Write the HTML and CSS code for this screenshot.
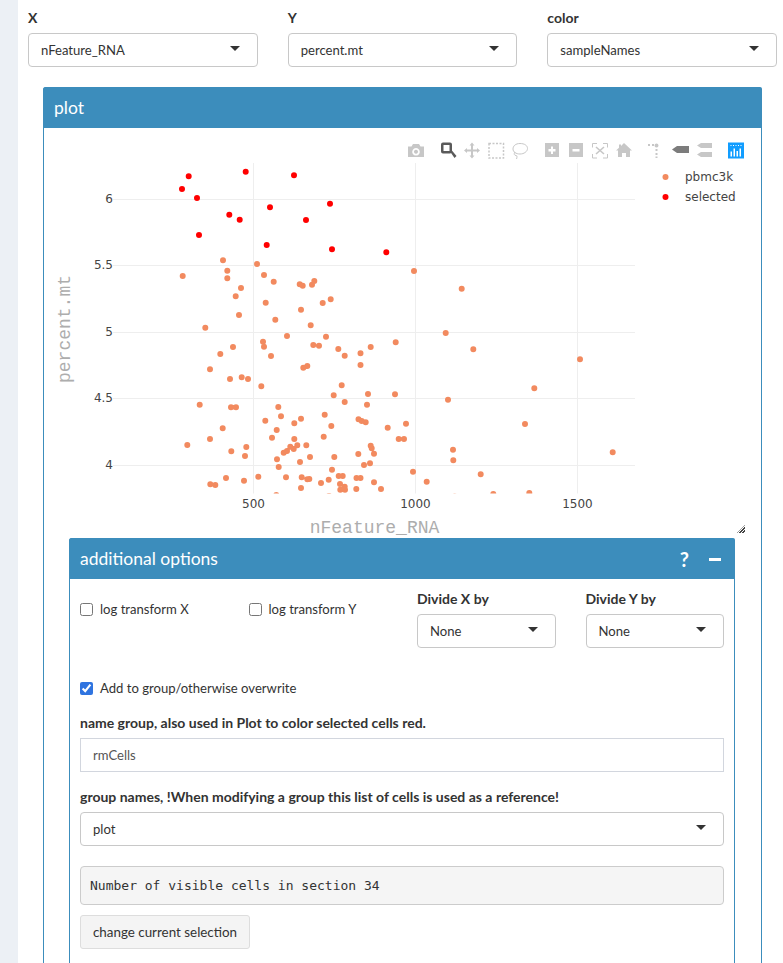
FILE: index.html
```html
<!DOCTYPE html>
<html lang="en">
<head>
  <meta charset="UTF-8" />
  <title>plot</title>
  <link rel="stylesheet" href="styles.css">
</head>
<body>
  <div class="side"></div>
  <main class="content">
    <div class="top-row">
      <div>
        <label class="field-label">X</label>
        <div class="select">nFeature_RNA</div>
      </div>
      <div>
        <label class="field-label">Y</label>
        <div class="select">percent.mt</div>
      </div>
      <div>
        <label class="field-label">color</label>
        <div class="select">sampleNames</div>
      </div>
    </div>

    <section class="box plot-box">
      <div class="box-header"><h3>plot</h3></div>
      <div class="plot-wrap">
        <svg class="plot" viewBox="44 128 717 410" width="717" height="410">
          <defs>
            <clipPath id="plot-clip"><rect x="113" y="163" width="522" height="330.5"/></clipPath>
          </defs>
          <path class="grid" d="M253.5 163V493.5M415.5 163V493.5M577.5 163V493.5M113 199.5H635M113 265.5H635M113 332.5H635M113 398.5H635M113 465.5H635"/>
          <g clip-path="url(#plot-clip)">
            <path class="dots-a" d="M223 260.3h0M257 264h0M227.3 270.7h0M264 275h0M182.7 276h0M227.3 278.3h0M273.7 281.7h0M314.3 281h0M299.7 284.3h0M302.7 285.7h0M312 284.7h0M241 288h0M235.7 296.3h0M330.7 299.3h0M265.7 302.7h0M322.7 303h0M301 309.7h0M239 315h0M275.3 319.7h0M310.7 325.3h0M205.3 327.7h0M287 336h0M326 336.7h0M263 341.7h0M313.3 345h0M319 345.7h0M233 347h0M264 346.7h0M338.3 349h0M414 271h0M461.7 288.7h0M445.7 333h0M395.7 342.3h0M370.7 347h0M473.3 349.3h0M220.3 354h0M271 356h0M344.7 355.7h0M360.5 353.3h0M307.3 366h0M303.3 367.7h0M360.5 365h0M210 369.3h0M241.7 377.3h0M230 379h0M248 379h0M261.3 386.3h0M341.7 385.3h0M333.7 395.3h0M344.7 402h0M199.7 404.7h0M231 407.3h0M236 407.3h0M278.3 407h0M281 416.3h0M324.7 414.7h0M265.3 420.7h0M301 418.7h0M294.3 423.3h0M358.5 419.3h0M331.3 426h0M222.7 428.3h0M276.7 430h0M272 437.7h0M323.7 436.7h0M210 439h0M294.3 439h0M187.3 445h0M246.3 447h0M306.3 445.3h0M297.3 445.3h0M290.3 446.7h0M293.7 449h0M287 451h0M283.7 452.7h0M231.3 451.3h0M245 456h0M310 457h0M334.3 457h0M358.3 454h0M277 459.3h0M300 462h0M278.7 467h0M332 469.7h0M226 478h0M258.3 476.7h0M286 477.3h0M301.7 477.3h0M307.3 479.3h0M309.3 479h0M338.7 476h0M342.7 476h0M328.7 479.7h0M356.5 478h0M360.5 478h0M244 480.7h0M321 483h0M210.3 484.3h0M215.3 485h0M340 484h0M344.7 486.7h0M301 488h0M340.3 489.7h0M345 489.7h0M356.3 489h0M276.3 495h0M329 496h0M580 359.3h0M534.3 388.3h0M368 394h0M395 394.3h0M367 404.7h0M448 399.7h0M406 423.7h0M361.7 421h0M365.7 422.3h0M387.7 427.7h0M525 424h0M398.7 439h0M404 439h0M453 449.7h0M370.7 445.7h0M371.7 448.3h0M374 453.7h0M453.3 460.3h0M612.7 452.3h0M370 463.3h0M364 465h0M413 471.7h0M480.7 474.3h0M426.7 481.7h0M374 482.3h0M381 489h0M493.3 494h0M529.3 493h0M454.7 496.5h0"/>
            <path class="dots-b" d="M188.7 176.3h0M245.7 171.7h0M294 175.3h0M182 189h0M197 198h0M330 203.7h0M270 207.3h0M229.3 214.7h0M239.7 219.7h0M306 220h0M199 235h0M266.7 245h0M332 249.3h0M386.3 252.3h0"/>
          </g>

          <text class="tick" x="113" y="203" text-anchor="end">6</text>
          <text class="tick" x="113" y="269" text-anchor="end">5.5</text>
          <text class="tick" x="113" y="336" text-anchor="end">5</text>
          <text class="tick" x="113" y="402" text-anchor="end">4.5</text>
          <text class="tick" x="113" y="469" text-anchor="end">4</text>
          <text class="tick" x="253.5" y="507.500" text-anchor="middle">500</text>
          <text class="tick" x="415.5" y="507.500" text-anchor="middle">1000</text>
          <text class="tick" x="577.5" y="507.500" text-anchor="middle">1500</text>
          <text class="axis-title" x="374.5" y="533" text-anchor="middle">nFeature_RNA</text>
          <text class="axis-title" transform="translate(70 329) rotate(-90)" text-anchor="middle">percent.mt</text>

          <path class="dots-a" d="M665.5 177h0"/>
          <path class="dots-b" d="M665.5 197h0"/>
          <text class="tick" x="685" y="181">pbmc3k</text>
          <text class="tick" x="685" y="201">selected</text>

          <!-- modebar -->
          <path class="mb" d="M408 146.5h3.5l1.5-2.5h6l1.5 2.5h3.5v10.500h-16zM416 148a3.800 3.800 0 1 0 .01 0zM416 149.800a2 2 0 1 1-.01 0z" fill-rule="evenodd"/>
          <path class="mb-on" d="M443 142.500h7a2 2 0 0 1 2 2v7a2 2 0 0 1-2 2h-7a2 2 0 0 1-2-2v-7a2 2 0 0 1 2-2zM443.500 145v6h6v-6z" fill-rule="evenodd"/>
          <path class="mb-on" d="M450 151.500l1.500-1.500 5 6-2 2z"/>
          <path class="mb" d="M472 142.500l2.500 3h-1.500v4h4v-1.500l3 2.500-3 2.500v-1.500h-4v4h1.500l-2.500 3-2.500-3h1.500v-4h-4v1.500l-3-2.500 3-2.500v1.500h4v-4h-1.500z"/>
          <path class="mb-line dash" d="M489 143.500h14.500v14.500h-14.500z"/>
          <path class="mb-line" d="M520 143.500c4.500 0 7.500 2 7.500 5s-3.500 5.500-7.500 5.500-7-2-7-5 2.500-5.500 7-5.500zM515 152c-1.500 2-.5 3.500 1 3.500s1 2 .5 3.500"/>
          <path class="mb" d="M545 143h14v14h-14zM551 146.500v2.500h-2.500v2.500h2.500v2.500h2v-2.500h2.500v-2.500h-2.500v-2.500z" fill-rule="evenodd"/>
          <path class="mb" d="M569 143h14v14h-14zM572.500 149v2.500h7v-2.500z" fill-rule="evenodd"/>
          <path class="mb-line" d="M597 143.500h-4.500v4M603 143.500h4.500v4M597 158h-4.500v-4M603 158h4.500v-4"/>
          <path class="mb-line wide" d="M596 147l8 7M604 147l-8 7"/>
          <path class="mb" d="M624 143l8 7.500h-2v6.500h-4v-4h-4v4h-4v-6.500h-2l3-2.800v-3.200h2v1.400z"/>
          <path class="mb" d="M648 144h2v2h-2zM652 144h2v2h-2zM656.500 143.500a2 2 0 1 1 .01 4 2 2 0 0 1 0-4zM655.500 149h2v2h-2zM655.500 153h2v2h-2zM655.500 156.500h2v1.500h-2z"/>
          <path class="mb-dark" d="M677 146h12v7h-12l-5-3.500z"/>
          <path class="mb" d="M701 143h11v5h-11l-4-2.500zM701 152h11v5h-11l-4-2.500z"/>
          <path class="mb-logo" d="M728 142.500h16v16h-16z"/>
          <path class="mb-logo-mark" d="M730.500 151.500h1.500v5h-1.500zM733.500 148.500h1.500v8h-1.500zM736.500 151h1.500v5.500h-1.500zM739.500 148.500h1.500v8h-1.500zM730.500 145h1v1h-1zM733 145h1v1h-1zM735.500 145h1v1h-1zM738 145h1v1h-1zM740.500 145h1v1h-1z"/>
        </svg>
        <span class="resize-handle"></span>
      </div>

      <section class="box inner-box">
        <div class="box-header">
          <h3>additional options</h3>
          <div class="box-tools"><span>?</span><span class="minus"></span></div>
        </div>
        <div class="box-body">
          <div class="log-row">
            <label class="check"><input type="checkbox"> log transform X</label>
            <label class="check"><input type="checkbox"> log transform Y</label>
            <div class="divide">
              <label class="field-label">Divide X by</label>
              <div class="select">None</div>
            </div>
            <div class="divide">
              <label class="field-label">Divide Y by</label>
              <div class="select">None</div>
            </div>
          </div>
          <label class="check add-group"><input type="checkbox" checked> Add to group/otherwise overwrite</label>
          <label class="field-label name-label">name group, also used in Plot to color selected cells red.</label>
          <input class="text-input" type="text" value="rmCells">
          <label class="field-label group-label">group names, !When modifying a group this list of cells is used as a reference!</label>
          <div class="select">plot</div>
          <pre class="verbatim">Number of visible cells in section 34</pre>
          <button class="btn" type="button">change current selection</button>
        </div>
      </section>
    </section>
  </main>
</body>
</html>
```

FILE: styles.css
```css
html, body {
  height: 963px;
  overflow: hidden;
}
body {
  margin: 0;
  display: flex;
  font-family: Lato, 'Noto Sans', sans-serif;
  font-size: 13.1px;
  color: #333;
  background: #fff;
}
.side {
  width: 18px;
  flex: none;
  background: #ecf0f5;
}
.content {
  flex: 1;
  min-width: 0;
  padding: 9px 6px 0 10px;
}
.top-row {
  display: grid;
  grid-template-columns: repeat(3, 1fr);
  gap: 30px;
}
.field-label {
  display: block;
  font-size: 14px;
  font-weight: 700;
  line-height: 18px;
  margin-bottom: 6px;
}
.select {
  position: relative;
  height: 34px;
  box-sizing: border-box;
  padding: 0 12px;
  line-height: 32px;
  background: #fff;
  border: 1px solid #c8c8c8;
  border-radius: 4px;
}
.select::after {
  content: "";
  position: absolute;
  right: 17px;
  top: 12px;
  border-style: solid;
  border-width: 5px 5px 0 5px;
  border-color: #333 transparent transparent transparent;
}
.box {
  border: 1px solid #3c8dbc;
  border-bottom: 0;
  border-radius: 3px 3px 0 0;
  background: #fff;
  box-sizing: border-box;
}
.box-header {
  height: 40px;
  margin: -1px -1px 0;
  padding: 0 10px;
  display: flex;
  align-items: center;
  justify-content: space-between;
  background: #3c8dbc;
  border-radius: 3px 3px 0 0;
  color: #fff;
  border: 1px solid #3c8dbc;
  border-bottom: 0;
}
.box-header h3 {
  margin: 0 0 2px;
  font-size: 17.5px;
  font-weight: 400;
}
.plot-box {
  margin: 20px 15px 0 15px;
  height: 876px;
}
.plot-wrap {
  position: relative;
  height: 410px;
}
.plot {
  display: block;
  overflow: visible;
}
.grid {
  fill: none;
  stroke: #eee;
  stroke-width: 1;
}
.dots-a, .dots-b {
  fill: none;
  stroke-linecap: round;
}
.dots-a {
  stroke: #f28a5f;
  stroke-width: 6;
}
.dots-b {
  stroke: #f00;
  stroke-width: 6;
}
.tick {
  font-family: 'DejaVu Sans', sans-serif;
  font-size: 12px;
  fill: #444;
}
.axis-title {
  font-family: 'Liberation Mono', monospace;
  font-size: 18px;
  fill: #adadad;
}
.mb { fill: #c7c7c7; }
.mb-on { fill: #5a5a5a; }
.mb-dark { fill: #7c7c7c; }
.mb-line {
  fill: none;
  stroke: #c7c7c7;
  stroke-width: 1;
}
.wide { stroke-width: 1.6; }
.dash { stroke-dasharray: 2 1.500; stroke-width: 1.500; }
.mb-logo { fill: #119dff; }
.mb-logo-mark { fill: #fff; }
.resize-handle {
  position: absolute;
  right: 16px;
  bottom: 5px;
  width: 8px;
  height: 8px;
  background: repeating-linear-gradient(135deg, transparent 0 1px, #444 1px 2px);
  clip-path: polygon(100% 0, 100% 100%, 0 100%);
}
.inner-box {
  position: relative;
  margin: 0 26px 0 25px;
  height: 425px;
}
.box-tools {
  display: flex;
  align-items: center;
  gap: 20px;
  font-size: 20px;
  font-weight: 700;
  padding-right: 3px;
}
.minus {
  display: block;
  width: 12px;
  height: 3px;
  background: #fff;
}
.box-body {
  padding: 11px 10px 0;
}
.log-row {
  display: grid;
  grid-template-columns: repeat(4, 1fr);
  gap: 30px;
}
.divide .field-label {
  margin-bottom: 6px;
}
.check {
  display: flex;
  align-items: center;
  gap: 7px;
  height: 20px;
  margin-top: 9px;
}
.check input {
  margin: 0;
  accent-color: #2f74e0;
}
.add-group {
  margin-top: 30px;
}
.name-label {
  margin-top: 16px;
  margin-bottom: 6px;
}
.group-label {
  margin-top: 16px;
  margin-bottom: 6px;
}
.text-input {
  display: block;
  width: 100%;
  height: 34px;
  box-sizing: border-box;
  padding: 0 12px;
  font: inherit;
  color: #555;
  border: 1px solid #d2d6de;
  margin: 0;
}
.verbatim {
  margin: 20px 0 10px;
  height: 39px;
  box-sizing: border-box;
  padding: 10px 9px;
  font-family: 'DejaVu Sans Mono', monospace;
  font-size: 13px;
  line-height: 18px;
  background: #f5f5f5;
  border: 1px solid #ccc;
  border-radius: 4px;
}
.btn {
  display: block;
  height: 34px;
  width: 170px;
  padding: 0;
  font: inherit;
  font-size: 13.4px;
  color: #333;
  background: #f4f4f4;
  border: 1px solid #ddd;
  border-radius: 3px;
}
```
